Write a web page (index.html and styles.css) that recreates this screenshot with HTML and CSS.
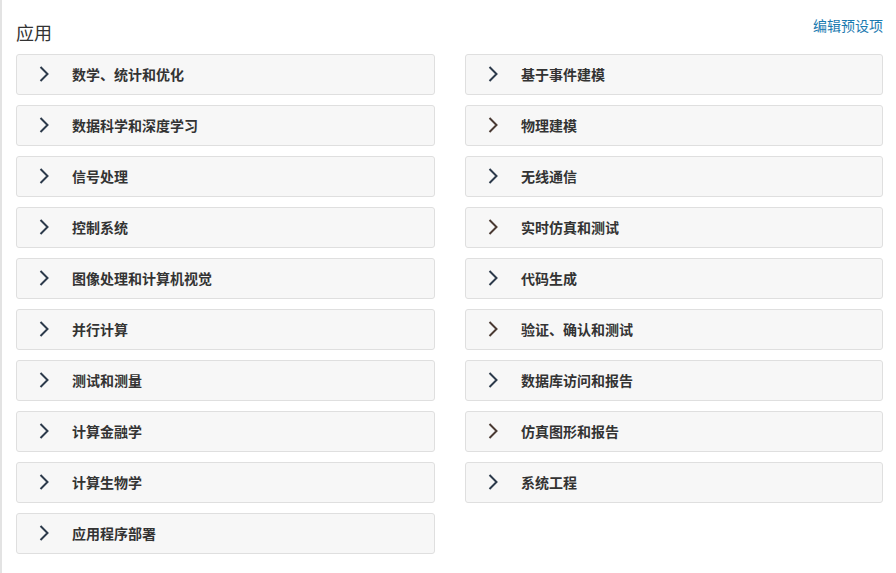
FILE: index.html
```html
<!DOCTYPE html>
<html lang="zh">
<head>
<meta charset="utf-8">
<link rel="stylesheet" href="styles.css">
</head>
<body>
<div class="page">
  <div class="header">
    <h2 class="title">应用</h2>
    <a class="edit" href="#">编辑预设项</a>
  </div>
  <div class="grid">
    <div class="card"><svg class="chev" viewBox="0 0 10 16"><path d="M1.5 1 L8.5 8 L1.5 15"/></svg><span>数学、统计和优化</span></div>
    <div class="card"><svg class="chev" viewBox="0 0 10 16"><path d="M1.5 1 L8.5 8 L1.5 15"/></svg><span>基于事件建模</span></div>
    <div class="card"><svg class="chev" viewBox="0 0 10 16"><path d="M1.5 1 L8.5 8 L1.5 15"/></svg><span>数据科学和深度学习</span></div>
    <div class="card"><svg class="chev brown" viewBox="0 0 10 16"><path d="M1.5 1 L8.5 8 L1.5 15"/></svg><span>物理建模</span></div>
    <div class="card"><svg class="chev" viewBox="0 0 10 16"><path d="M1.5 1 L8.5 8 L1.5 15"/></svg><span>信号处理</span></div>
    <div class="card"><svg class="chev" viewBox="0 0 10 16"><path d="M1.5 1 L8.5 8 L1.5 15"/></svg><span>无线通信</span></div>
    <div class="card"><svg class="chev" viewBox="0 0 10 16"><path d="M1.5 1 L8.5 8 L1.5 15"/></svg><span>控制系统</span></div>
    <div class="card"><svg class="chev brown" viewBox="0 0 10 16"><path d="M1.5 1 L8.5 8 L1.5 15"/></svg><span>实时仿真和测试</span></div>
    <div class="card"><svg class="chev" viewBox="0 0 10 16"><path d="M1.5 1 L8.5 8 L1.5 15"/></svg><span>图像处理和计算机视觉</span></div>
    <div class="card"><svg class="chev" viewBox="0 0 10 16"><path d="M1.5 1 L8.5 8 L1.5 15"/></svg><span>代码生成</span></div>
    <div class="card"><svg class="chev" viewBox="0 0 10 16"><path d="M1.5 1 L8.5 8 L1.5 15"/></svg><span>并行计算</span></div>
    <div class="card"><svg class="chev brown" viewBox="0 0 10 16"><path d="M1.5 1 L8.5 8 L1.5 15"/></svg><span>验证、确认和测试</span></div>
    <div class="card"><svg class="chev" viewBox="0 0 10 16"><path d="M1.5 1 L8.5 8 L1.5 15"/></svg><span>测试和测量</span></div>
    <div class="card"><svg class="chev" viewBox="0 0 10 16"><path d="M1.5 1 L8.5 8 L1.5 15"/></svg><span>数据库访问和报告</span></div>
    <div class="card"><svg class="chev" viewBox="0 0 10 16"><path d="M1.5 1 L8.5 8 L1.5 15"/></svg><span>计算金融学</span></div>
    <div class="card"><svg class="chev brown" viewBox="0 0 10 16"><path d="M1.5 1 L8.5 8 L1.5 15"/></svg><span>仿真图形和报告</span></div>
    <div class="card"><svg class="chev" viewBox="0 0 10 16"><path d="M1.5 1 L8.5 8 L1.5 15"/></svg><span>计算生物学</span></div>
    <div class="card"><svg class="chev" viewBox="0 0 10 16"><path d="M1.5 1 L8.5 8 L1.5 15"/></svg><span>系统工程</span></div>
    <div class="card"><svg class="chev" viewBox="0 0 10 16"><path d="M1.5 1 L8.5 8 L1.5 15"/></svg><span>应用程序部署</span></div>
  </div>
</div>
</body>
</html>
```
FILE: styles.css
```css
html, body {
  margin: 0;
  padding: 0;
  background: #ffffff;
}
body {
  font-family: "Noto Sans CJK SC", "Noto Sans", sans-serif;
  color: #333333;
}
.page {
  box-sizing: border-box;
  width: 896px;
  height: 573px;
  border-left: 2px solid #e3e3e3;
  padding: 15px 13px 0 14px;
}
.header {
  display: flex;
  justify-content: space-between;
  align-items: flex-start;
  height: 39px;
}
.title {
  margin: 4px 0 0 0;
  font-size: 18px;
  font-weight: normal;
  line-height: 26px;
  color: #333333;
}
.edit {
  margin-top: -1px;
  font-size: 14px;
  line-height: 22px;
  color: #1a7ab0;
  text-decoration: none;
}
.grid {
  display: grid;
  grid-template-columns: 419px 418px;
  column-gap: 30px;
  row-gap: 10px;
  grid-auto-rows: 41px;
}
.card {
  box-sizing: border-box;
  display: flex;
  align-items: center;
  border: 1px solid #dfdfdf;
  border-radius: 3px;
  background: #f7f7f7;
  padding-left: 22px;
  padding-bottom: 1px;
}
.chev {
  width: 10px;
  height: 16px;
  fill: none;
  stroke: #2c3a4b;
  stroke-width: 2;
  margin-right: 23px;
  flex: none;
}
.chev.brown {
  stroke: #4a3a33;
}
.card span {
  font-size: 14px;
  font-weight: bold;
  color: #333333;
  line-height: 20px;
}
```
